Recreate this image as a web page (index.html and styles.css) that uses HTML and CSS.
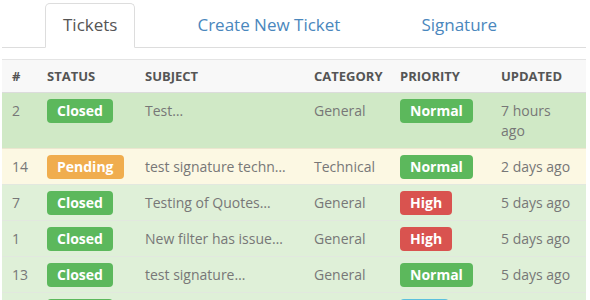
FILE: index.html
```html
<!DOCTYPE html>
<html>
<head>
<meta charset="utf-8">
<link rel="stylesheet" href="styles.css">
</head>
<body>
<div class="wrap">
  <ul class="tabs">
    <li class="tab active">Tickets</li>
    <li class="tab t2">Create New Ticket</li>
    <li class="tab t3">Signature</li>
  </ul>
  <table class="tickets">
    <colgroup>
      <col class="c1"><col class="c2"><col class="c3"><col class="c4"><col class="c5"><col class="c6">
    </colgroup>
    <thead>
      <tr><th>#</th><th>Status</th><th>Subject</th><th>Category</th><th>Priority</th><th>Updated</th></tr>
    </thead>
    <tbody>
      <tr class="success hover"><td>2</td><td><span class="label green">Closed</span></td><td>Test…</td><td>General</td><td><span class="label green">Normal</span></td><td>7 hours ago</td></tr>
      <tr class="warning"><td>14</td><td><span class="label orange">Pending</span></td><td>test signature techn…</td><td>Technical</td><td><span class="label green">Normal</span></td><td>2 days ago</td></tr>
      <tr class="success"><td>7</td><td><span class="label green">Closed</span></td><td>Testing of Quotes…</td><td>General</td><td><span class="label red">High</span></td><td>5 days ago</td></tr>
      <tr class="success"><td>1</td><td><span class="label green">Closed</span></td><td>New filter has issue…</td><td>General</td><td><span class="label red">High</span></td><td>5 days ago</td></tr>
      <tr class="success"><td>13</td><td><span class="label green">Closed</span></td><td>test signature…</td><td>General</td><td><span class="label green">Normal</span></td><td>5 days ago</td></tr>
      <tr class="success"><td>5</td><td><span class="label green">Closed</span></td><td>Test ticket…</td><td>General</td><td><span class="label blue">Low</span></td><td>6 days ago</td></tr>
    </tbody>
  </table>
</div>
</body>
</html>
```

FILE: styles.css
```css
html, body {
  margin: 0;
  padding: 0;
  background: #fff;
}
body {
  font-family: "Open Sans", "Liberation Sans", sans-serif;
  font-size: 14px;
  color: #777;
  overflow: hidden;
}
.wrap {
  width: 584px;
  margin-left: 2px;
}
.tabs {
  list-style: none;
  margin: 3px 0 0 0;
  padding: 0 0 0 43px;
  display: flex;
  border-bottom: 1px solid #ddd;
}
.tab {
  font-size: 17px;
  line-height: 22px;
  padding: 10px 17px 11px;
  margin-bottom: -1px;
  border: 1px solid transparent;
  border-radius: 5px 5px 0 0;
  color: #4a87bd;
}
.tab.active {
  color: #555;
  background: #fff;
  border-color: #ddd;
  border-bottom-color: #fff;
}
.tab.t2 { margin-left: 44px; }
.tab.t3 { margin-left: 45px; }

.tickets {
  margin-top: 11px;
  width: 584px;
  border-collapse: collapse;
  table-layout: fixed;
}
.c1 { width: 35px; }
.c2 { width: 98px; }
.c3 { width: 169px; }
.c4 { width: 86px; }
.c5 { width: 101px; }
.c6 { width: 95px; }

.tickets th {
  text-align: left;
  font-size: 13px;
  font-weight: 700;
  text-transform: uppercase;
  color: #555;
  line-height: 17px;
  padding: 8px 10px 7px;
  background: #f8f8f8;
  border-top: 1px solid #e4e4e4;
  border-bottom: 1px solid #dcdcdc;
}
.tickets td {
  line-height: 20px;
  padding: 8px 10px 7px;
  vertical-align: top;
  border-top: 1px solid #e2e8df;
  white-space: normal;
}
tr.success td { background: #dff0d8; }
tr.success.hover td { background: #d0e9c6; }
tr.warning td { background: #fcf8e3; border-top-color: #ece6d0; }

.label {
  display: inline-block;
  font-weight: 700;
  font-size: 14px;
  line-height: 24px;
  padding: 0 10px;
  margin: -2px 0;
  color: #fff;
  border-radius: 4px;
}
.green { background: #5cb85c; }
.orange { background: #f0ad4e; }
.red { background: #d9534f; }
.blue { background: #5bc0de; }
```
